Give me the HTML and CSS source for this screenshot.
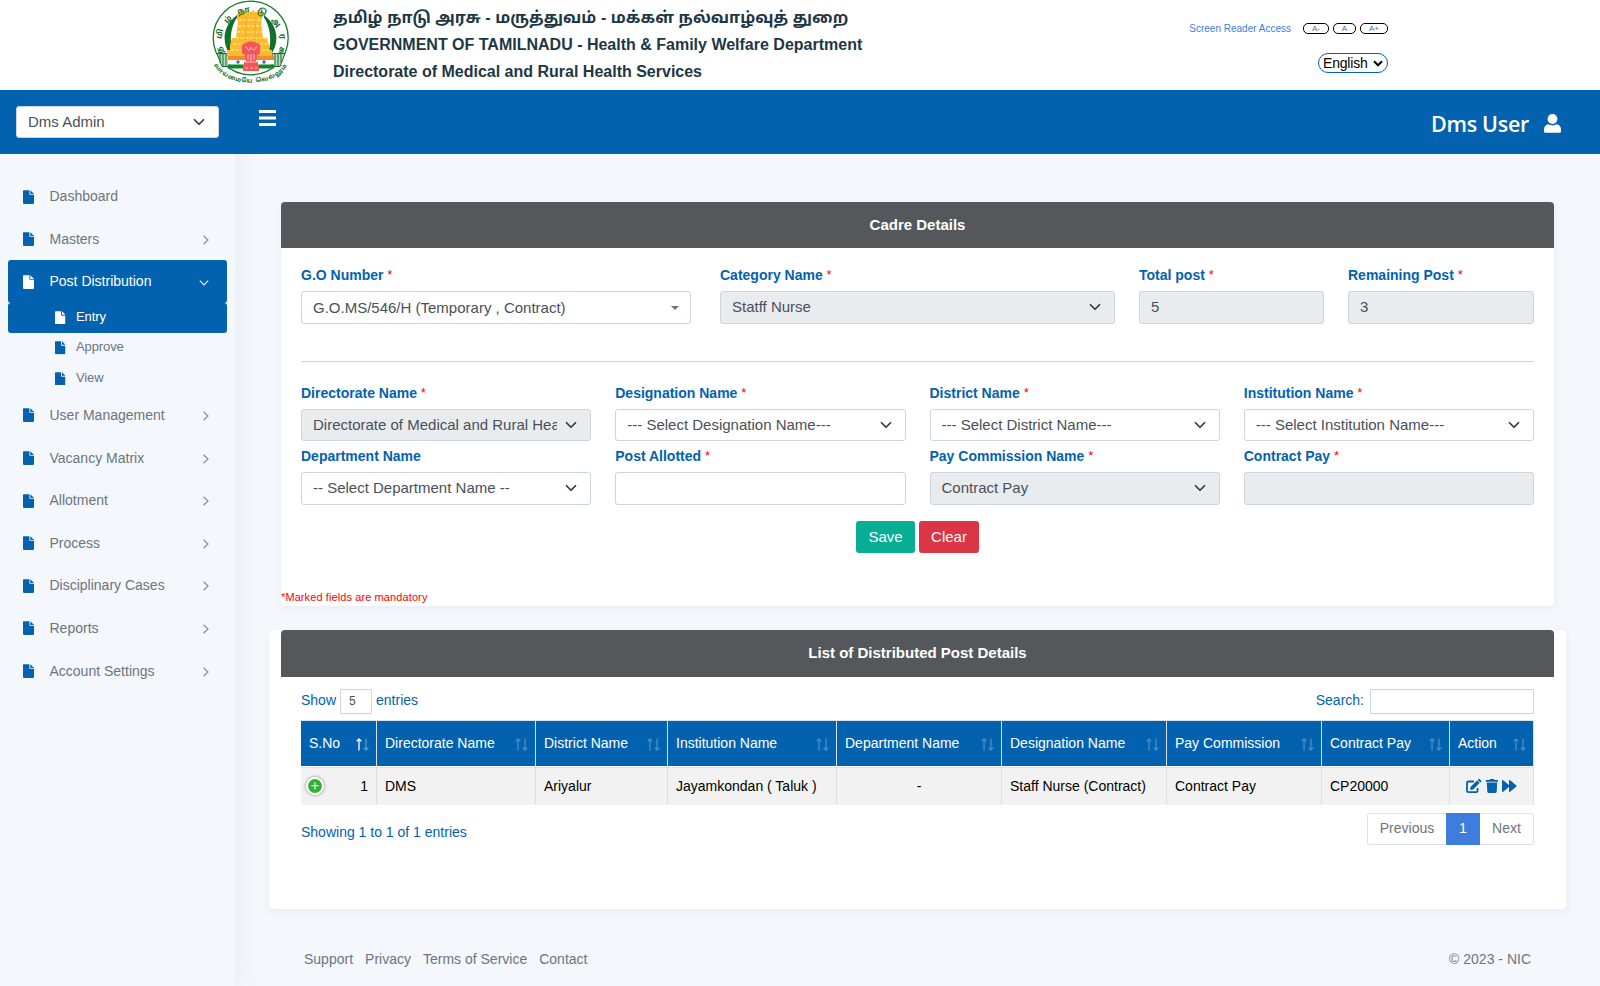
FILE: index.html
```html
<!DOCTYPE html>
<html lang="en">
<head>
<meta charset="utf-8">
<title>Cadre Details</title>
<link rel="stylesheet" href="styles.css">
</head>
<body>
<svg class="defs" width="0" height="0" aria-hidden="true">
  <symbol id="file" viewBox="0 0 12 15"><path d="M1 0h6v4.400c0 .4.300.7.700.7H12v9c0 .5-.4.9-.9.9H.9c-.5 0-.9-.4-.9-.9V.9C0 .4.400 0 .9 0zM8 0l4 4.100H8z"/></symbol>
  <symbol id="chev" viewBox="0 0 16 16"><path d="M2 5l6 6 6-6" fill="none" stroke="#343a40" stroke-width="2.300" stroke-linecap="round" stroke-linejoin="round"/></symbol>
  <symbol id="next" viewBox="0 0 6 10"><path d="M.6 .8L5 5 .6 9.200" fill="none" stroke="currentColor" stroke-width="1.200"/></symbol>
  <symbol id="sort" viewBox="0 0 13 13"><path class="up" d="M3 12.500V1M.6 3.400L3 1l2.400 2.400" fill="none" stroke="#fff" stroke-width="1.300"/></symbol>
  <symbol id="sort-down" viewBox="0 0 13 13"><path d="M10 .5V12M7.600 9.600L10 12l2.400-2.400" fill="none" stroke="#fff" stroke-width="1.300"/></symbol>
</svg>

<header class="masthead">
  <svg class="emblem" viewBox="0 0 82 86">
    <defs>
      <path id="ring" d="M13.500 53A29.500 29.500 0 1 1 68 53"/>
      <path id="motto" d="M4 65Q14 82 40.500 82.500Q68 82 78 64"/>
    </defs>
    <ellipse cx="40.700" cy="38" rx="37.500" ry="36.800" fill="#fff" stroke="#1c7a2c" stroke-width="1.300"/>
    <path d="M27 15C11 27 13 44 19 53h8V30z M54 15C70 27 68 44 62 53H52V30z" fill="#12702a"/>
    <path d="M30 14C20 24 19 42 23 53h8z M51 14C61 24 62 42 58 53h-8z" fill="#fff"/>
    <path d="M7 53.500h12v13H12z M62 53.500h13l-5 13h-8z" fill="#bcd8c1" stroke="#12702a"/>
    <path d="M10 54v9M13 54v12M16 54v12M65 54v12M68 54v12M71 54v9" stroke="#12702a"/>
    <path d="M29 12h3v-1.500h2V12h3v-1.500h2V12h3v-1.500h2V12h3v-1.500h2V12h3v7l-1 2 2 17h4l2 7v5h3v6H17v-6h3v-5l2-7h4l2-17-1-2v-5z" fill="#fdbb2b"/>
    <path d="M29 20h22M28 26h25M27 32h27M26 38h30M23 44h36M21 50h40" stroke="#fff3c4" stroke-width="1" stroke-dasharray="3 1.500"/>
    <path d="M36 17v36M45 17v36" stroke="#d99414" stroke-width=".8" stroke-dasharray="2 1.500"/>
    <path d="M18 56h46v4H18z" fill="#f58a2c"/>
    <path d="M18 60h46v4.500H18z" fill="#fff"/>
    <path d="M18 64.500h46v4H18z" fill="#12852d"/>
    <circle cx="28" cy="62" r="1.700" fill="#4f62b5"/><circle cx="54" cy="62" r="1.700" fill="#4f62b5"/>
    <path d="M32 49c-1-4 1-6 4-6 2-2 8-2 10 0 4 0 5 3 4 6 1 3-1 6-3 6l-1 7h2v3h1v6H33v-6h1v-3h2l-1-7c-3-1-4-3-3-6z" fill="#f4545c"/>
    <path d="M35 47c2-1 2 3 4 3s1-3 2-3 1 3 3 3 1-4 3-3M38 54v6M41 54v7M44 54v6M35 62h12M35 68h3m2 0h3m2 0h2" fill="none" stroke="#ffc9cb"/>
    <text class="ring-text" font-size="8"><textPath href="#ring" textLength="116" lengthAdjust="spacing">தமிழ்நாடுஅரசு</textPath></text>
    <text class="ring-text" font-size="6"><textPath href="#motto" textLength="84" lengthAdjust="spacing">வாய்மையே வெல்லும்</textPath></text>
  </svg>
  <div class="titles">
    <div class="tamil">தமிழ் நாடு அரசு - மருத்துவம் - மக்கள் நல்வாழ்வுத் துறை</div>
    <div>GOVERNMENT OF TAMILNADU - Health &amp; Family Welfare Department</div>
    <div>Directorate of Medical and Rural Health Services</div>
  </div>
  <div class="access">
    <div class="access-row">
      <a class="reader">Screen Reader Access</a>
      <button class="pill minus">A-</button><button class="pill normal">A</button><button class="pill plus">A+</button>
    </div>
    <div class="lang">English<svg viewBox="0 0 10 7" width="10" height="7"><path d="M1 1.300l4 4 4-4" fill="none" stroke="#000" stroke-width="2"/></svg></div>
  </div>
</header>

<div class="shell">
  <aside class="sidebar">
    <div class="brand"><div class="control role">Dms Admin<svg class="chev"><use href="#chev"/></svg></div></div>
    <nav class="menu">
      <a class="item"><svg class="file"><use href="#file"/></svg>Dashboard</a>
      <a class="item"><svg class="file"><use href="#file"/></svg>Masters<svg class="arrow"><use href="#next"/></svg></a>
      <a class="item active"><svg class="file"><use href="#file"/></svg>Post Distribution<svg class="arrow open"><use href="#next"/></svg></a>
      <a class="sub active"><svg class="file"><use href="#file"/></svg>Entry</a>
      <a class="sub"><svg class="file"><use href="#file"/></svg>Approve</a>
      <a class="sub"><svg class="file"><use href="#file"/></svg>View</a>
      <a class="item"><svg class="file"><use href="#file"/></svg>User Management<svg class="arrow"><use href="#next"/></svg></a>
      <a class="item"><svg class="file"><use href="#file"/></svg>Vacancy Matrix<svg class="arrow"><use href="#next"/></svg></a>
      <a class="item"><svg class="file"><use href="#file"/></svg>Allotment<svg class="arrow"><use href="#next"/></svg></a>
      <a class="item"><svg class="file"><use href="#file"/></svg>Process<svg class="arrow"><use href="#next"/></svg></a>
      <a class="item"><svg class="file"><use href="#file"/></svg>Disciplinary Cases<svg class="arrow"><use href="#next"/></svg></a>
      <a class="item"><svg class="file"><use href="#file"/></svg>Reports<svg class="arrow"><use href="#next"/></svg></a>
      <a class="item"><svg class="file"><use href="#file"/></svg>Account Settings<svg class="arrow"><use href="#next"/></svg></a>
    </nav>
  </aside>

  <div class="page">
    <div class="topbar">
      <svg class="burger" viewBox="0 0 17 16"><path d="M0 1.500h17M0 8h17M0 14.500h17" stroke="#fff" stroke-width="3"/></svg>
      <div class="user">Dms User<svg viewBox="0 0 17 19" width="17" height="19"><circle cx="8.500" cy="5" r="4.900" fill="#fff"/><path d="M4.300 10.300c2.400 1.500 6 1.500 8.400 0 2.600.4 4.300 2.300 4.300 5v1.900c0 1-.7 1.600-1.600 1.600H1.600C.7 18.800 0 18.200 0 17.200v-1.900c0-2.700 1.700-4.600 4.300-5z" fill="#fff"/></svg></div>
    </div>

    <main class="content">
      <section class="card form-card">
        <h2 class="card-title">Cadre Details</h2>
        <div class="form">
          <div class="row first">
            <div class="field wide"><label>G.O Number <i>*</i></label><div class="control go">G.O.MS/546/H (Temporary , Contract)<svg class="caret" viewBox="0 0 8 4"><path d="M0 0h8L4 4z" fill="#6c757d"/></svg></div></div>
            <div class="field category"><label>Category Name <i>*</i></label><div class="control off">Statff Nurse<svg class="chev"><use href="#chev"/></svg></div></div>
            <div class="field total"><label>Total post <i>*</i></label><div class="control off">5</div></div>
            <div class="field"><label>Remaining Post <i>*</i></label><div class="control off">3</div></div>
          </div>
          <hr>
          <div class="row">
            <div class="field"><label>Directorate Name <i>*</i></label><div class="control off"><span class="clip">Directorate of Medical and Rural Health Services</span><svg class="chev"><use href="#chev"/></svg></div></div>
            <div class="field"><label>Designation Name <i>*</i></label><div class="control">--- Select Designation Name---<svg class="chev"><use href="#chev"/></svg></div></div>
            <div class="field"><label>District Name <i>*</i></label><div class="control">--- Select District Name---<svg class="chev"><use href="#chev"/></svg></div></div>
            <div class="field"><label>Institution Name <i>*</i></label><div class="control">--- Select Institution Name---<svg class="chev"><use href="#chev"/></svg></div></div>
          </div>
          <div class="row last">
            <div class="field"><label>Department Name</label><div class="control">-- Select Department Name --<svg class="chev"><use href="#chev"/></svg></div></div>
            <div class="field"><label>Post Allotted <i>*</i></label><div class="control"></div></div>
            <div class="field"><label>Pay Commission Name <i>*</i></label><div class="control off">Contract Pay<svg class="chev"><use href="#chev"/></svg></div></div>
            <div class="field"><label>Contract Pay <i>*</i></label><div class="control off"></div></div>
          </div>
          <div class="buttons"><button class="btn save">Save</button><button class="btn clear">Clear</button></div>
        </div>
        <p class="note">*Marked fields are mandatory</p>
      </section>

      <section class="card list-card">
        <h2 class="card-title">List of Distributed Post Details</h2>
        <div class="list">
          <div class="tools">
            <span>Show</span><div class="length">5</div><span>entries</span>
            <span class="search-label">Search:</span><div class="search"></div>
          </div>
          <table class="grid">
            <colgroup><col class="c1"><col class="c2"><col class="c3"><col class="c4"><col class="c5"><col class="c6"><col class="c7"><col class="c8"><col class="c9"></colgroup>
            <thead><tr>
              <th><div>S.No<svg class="sort asc"><use href="#sort"/><use class="dim" href="#sort-down"/></svg></div></th>
              <th><div>Directorate Name<svg class="sort"><use href="#sort"/><use href="#sort-down"/></svg></div></th>
              <th><div>District Name<svg class="sort"><use href="#sort"/><use href="#sort-down"/></svg></div></th>
              <th><div>Institution Name<svg class="sort"><use href="#sort"/><use href="#sort-down"/></svg></div></th>
              <th><div>Department Name<svg class="sort"><use href="#sort"/><use href="#sort-down"/></svg></div></th>
              <th><div>Designation Name<svg class="sort"><use href="#sort"/><use href="#sort-down"/></svg></div></th>
              <th><div>Pay Commission<svg class="sort"><use href="#sort"/><use href="#sort-down"/></svg></div></th>
              <th><div>Contract Pay<svg class="sort"><use href="#sort"/><use href="#sort-down"/></svg></div></th>
              <th><div>Action<svg class="sort"><use href="#sort"/><use href="#sort-down"/></svg></div></th>
            </tr></thead>
            <tbody><tr>
              <td class="sno"><div><svg class="expand" viewBox="0 0 20 20"><circle cx="10" cy="10" r="8.500" fill="#31b131" stroke="#fff" stroke-width="2"/><path d="M6 9.800h8M10 5.800v8" stroke="#fff" stroke-width="1.200"/></svg>1</div></td>
              <td>DMS</td><td>Ariyalur</td><td>Jayamkondan ( Taluk )</td><td class="mid">-</td><td>Staff Nurse (Contract)</td><td>Contract Pay</td><td>CP20000</td>
              <td><div class="actions">
                <svg viewBox="0 0 16 14" width="16" height="14"><path d="M8 2.500H2.300c-.7 0-1.300.6-1.300 1.300v8c0 .7.600 1.300 1.300 1.300h8c.7 0 1.300-.6 1.300-1.300V9" fill="none" stroke="#0262af" stroke-width="1.800"/><path d="M4.500 8L11 1.500l2.600 2.600-6.500 6.400-2.900.4zM11.700.9l.6-.6c.5-.5 1-.5 1.500 0l1.200 1.200c.5.500.5 1 0 1.500l-.7.600z" fill="#0262af"/></svg>
                <svg viewBox="0 0 12 14" width="12" height="14"><path d="M0 1h3.500L4 0h4l.5 1H12v1.700H0zM.8 3.600h10.400l-.5 9.200c0 .7-.6 1.200-1.300 1.200H2.600c-.7 0-1.300-.5-1.300-1.200z" fill="#0262af"/></svg>
                <svg viewBox="0 0 15 12" width="15" height="12"><path d="M0 .8v10.400c0 .7.600.9 1.100.5L7 7v4.200c0 .7.600.9 1.100.5l6.300-5.200c.3-.3.300-.7 0-1L8.100.3C7.600-.1 7 .1 7 .8V5L1.100.3C.6-.1 0 .1 0 .8z" fill="#0262af"/></svg>
              </div></td>
            </tr></tbody>
          </table>
          <div class="summary">
            <span>Showing 1 to 1 of 1 entries</span>
            <div class="pager"><a class="prev">Previous</a><a class="current">1</a><a class="nxt">Next</a></div>
          </div>
        </div>
      </section>
    </main>

    <footer class="footer">
      <a>Support</a><a>Privacy</a><a>Terms of Service</a><a>Contact</a><span>© 2023 - NIC</span>
    </footer>
  </div>
</div>
</body>
</html>
```

FILE: styles.css
```css
* { box-sizing: border-box; }
body { margin: 0; background: #f4f7fc; font: 14px/20px "Liberation Sans", Arial, sans-serif; color: #6c757d; height: 986px; overflow: hidden; }
.defs { position: absolute; }
svg { flex: none; display: block; }
button { font-family: inherit; }

.masthead { position: relative; z-index: 2; height: 90px; background: #fff; display: flex; padding-left: 210px; }
.emblem { width: 82px; height: 86px; }
.ring-text { fill: #12702a; font-family: "Liberation Sans", "Noto Sans Tamil", sans-serif; font-weight: bold; }
.titles { padding: 4px 0 0 41px; width: 660px; font-weight: bold; font-size: 16px; line-height: 27px; color: #1d3744; white-space: nowrap; }
.tamil { font-family: "Liberation Sans", "Noto Sans Tamil", sans-serif; height: 27px; letter-spacing: .06px; }
.access { margin: 0 212px 0 auto; width: 220px; display: flex; flex-direction: column; align-items: flex-end; }
.access-row { display: flex; align-items: center; height: 11px; margin-top: 23px; }
.reader { font-size: 10px; line-height: 11px; padding-bottom: 1px; color: #3d7ddd; margin-right: 12px; white-space: nowrap; }
.pill { height: 11px; padding: 0; border: 1px solid #000; border-radius: 5px; background: #fff; font-size: 8px; line-height: 9px; color: #4570b5; }
.minus { width: 26px; }
.normal { width: 23px; margin: 0 4px; }
.plus { width: 28px; }
.lang { margin-top: 19px; width: 70px; height: 20px; border: 1px solid #0262af; border-radius: 10px; color: #000; font-size: 14px; letter-spacing: -.2px; line-height: 18px; padding: 0 4px; display: flex; align-items: center; justify-content: space-between; }

.shell { display: flex; height: 896px; }
.sidebar { position: relative; z-index: 1; width: 235px; flex: none; background: #f4f7fc; box-shadow: 0 0 28px rgba(82, 85, 92, .09); }
.brand { height: 64px; background: #0262af; padding: 16px; }
.control { display: flex; align-items: center; height: 32px; background: #fff; border: 1px solid #ced4da; border-radius: 3px; padding: 0 11px 1px; font-size: 15px; color: #495057; white-space: nowrap; }
.role { width: 203px; }
.chev { width: 12px; height: 12px; margin-left: auto; margin-right: 2px; }
.menu { padding: 21px 8px 0; }
.item, .sub { display: flex; align-items: center; border-radius: 3px; }
.item { height: 42.600px; padding: 0 18px .6px 15px; }
.sub { height: 30.400px; padding: 0 0 2px 47px; font-size: 13px; letter-spacing: -.1px; }
.file { width: 11px; height: 14px; margin: 1px 15.500px 0 0; fill: #0262af; }
.sub .file { width: 10.500px; height: 13.500px; margin-right: 10.500px; }
.active { background: #0262af; color: #fff; }
.active .file { fill: #fff; }
.arrow { width: 6px; height: 10px; margin-left: auto; margin-top: 2px; color: #868e96; }
.open { transform: rotate(90deg); margin-right: 2px; margin-top: 3px; color: #e6eef7; }

.page { flex: 1; min-width: 0; display: flex; flex-direction: column; }
.topbar { height: 64px; flex: none; background: #0262af; display: flex; justify-content: space-between; padding: 20px 39px 0 24px; }
.burger { width: 17px; height: 16px; }
.user { display: flex; align-items: center; gap: 15px; height: 27px; font: 600 21.500px/27px "Open Sans", "Noto Sans", sans-serif; letter-spacing: -.3px; color: #fff; }

.content { padding: 48px 34px 0; }
.card { background: #fff; border-radius: 4px; box-shadow: 0 3px 8px rgba(70, 95, 190, .07); }
.form-card { height: 404px; margin: 0 12px 24px; display: flex; flex-direction: column; }
.card-title { margin: 0; height: 46px; background: #54585b; border-radius: 4px 4px 0 0; color: #fff; text-align: center; font-size: 15px; line-height: 46px; }
.form { padding: 17px 20px 0; }
.row { display: grid; grid-template-columns: repeat(4, 1fr); gap: 24px; height: 63px; }
.first { grid-template-columns: 419px 419px 209px 186px; gap: 0; height: 71px; }
.wide { width: 390px; }
.category { width: 395px; }
.total { width: 185px; }
.field label { display: block; height: 26px; line-height: 20px; font-weight: bold; color: #0262af; white-space: nowrap; }
.field i { position: relative; top: -1px; font-size: 13px; font-style: normal; font-weight: normal; color: #f00; }
.first .control, .last .control { height: 33px; }
.first .go { padding-bottom: 0; }
.caret { width: 8px; height: 4px; margin-left: auto; }
.off { background: #e9ecef; }
.clip { width: 244px; overflow: hidden; }
hr { border: 0; height: 1px; margin: 25px 0 21px; background: #c0d8eb; }
.buttons { margin-top: 12px; display: flex; justify-content: center; gap: 4px; }
.btn { height: 32px; border: 0; border-radius: 3px; color: #fff; font-size: 15px; padding: 0; line-height: 32px; }
.save { width: 59px; background: #07ad94; }
.clear { width: 60px; background: #dc3545; }
.note { margin: auto 0 0; height: 18px; line-height: 18px; font-size: 11px; letter-spacing: .1px; color: #f00; }

.list-card { height: 279px; padding: 0 12px; }
.list-card .card-title { height: 47px; line-height: 45px; }
.list { padding: 12px 20px 0; color: #0262af; }
.tools { display: flex; height: 25px; line-height: 22px; margin-bottom: 6px; }
.length { width: 32px; height: 25px; margin: 0 4px; border: 1px solid #ced4da; border-radius: 1px; padding-left: 8px; line-height: 23px; font-size: 12px; color: #495057; }
.search-label { margin-left: auto; }
.search { width: 164px; height: 25px; margin-left: 6px; border: 1px solid #ced4da; border-radius: 1px; }
.grid { table-layout: fixed; width: 1233px; border-spacing: 0; border-top: 1px solid #dee2e6; color: #000; }
.grid th, .grid td { padding: 0 8px 2px; border-right: 1px solid #dcdfe2; text-align: left; font-weight: normal; white-space: nowrap; }
.grid th { height: 47px; background: #0262af; background-clip: padding-box; border-bottom: 1px solid #dee2e6; color: #fff; padding-right: 7px; box-shadow: inset 0 -1px #fff; }
.grid th div { display: flex; align-items: center; }
.grid td { height: 37px; background: #f2f2f2; }
.c1 { width: 76px; } .c2 { width: 159px; } .c3 { width: 132px; } .c4 { width: 169px; } .c5, .c6 { width: 165px; } .c7 { width: 155px; } .c8 { width: 128px; } .c9 { width: 84px; }
.sort { width: 13px; height: 13px; margin-left: auto; margin-top: 2px; opacity: .28; }
.asc { opacity: 1; }
.dim { opacity: .35; }
.grid .sno { padding: 0 8px 2px 4px; }
.sno div { display: flex; align-items: center; justify-content: space-between; }
.expand { width: 20px; height: 20px; border-radius: 50%; box-shadow: 0 0 3px #777; transform: scale(.92); }
.grid .mid { text-align: center; }
.actions { display: flex; align-items: center; padding-left: 8px; gap: 4px; }
.summary { display: flex; justify-content: space-between; padding-top: 8px; line-height: 38px; }
.pager { display: flex; height: 32px; line-height: 29px; color: #6c757d; }
.pager a { height: 32px; border: 1px solid #dee2e6; text-align: center; }
.prev { width: 79px; border-radius: 3px 0 0 3px; }
.pager .current { width: 34px; background: #3c7ddd; border-color: #3c7ddd; color: #fff; }
.nxt { width: 54px; border-radius: 0 3px 3px 0; }
.pager .nxt { border-left: 0; }
.pager .prev { border-right: 0; }

.footer { margin-top: 40px; padding: 0 69px; display: flex; gap: 12px; }
.footer span { margin-left: auto; }
```
